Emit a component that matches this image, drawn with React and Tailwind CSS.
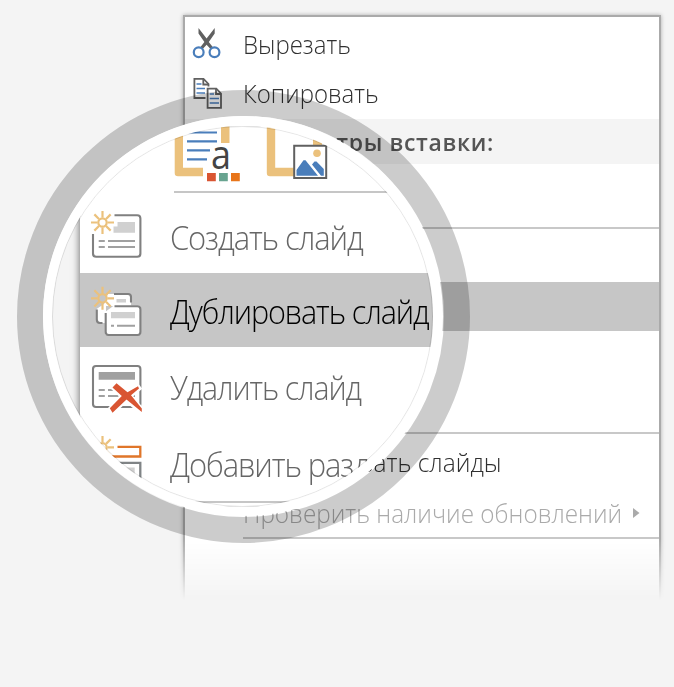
import React from "react";

const Star = ({ cx, cy }) => (
  <g stroke="#ebc17c" strokeWidth="2.2" fill="none">
    <circle cx={cx} cy={cy} r="4.2" />
    {[0, 45, 90, 135, 180, 225, 270, 315].map((a) => (
      <path key={a} d={`M${cx + 5} ${cy}H${cx + 11.5}`} transform={`rotate(${a} ${cx} ${cy})`} />
    ))}
  </g>
);

const CutIcon = () => (
  <svg className="h-[34px] w-8 shrink-0" viewBox="191 26 32 34">
    <path d="M198.5 28 L206.6 38.5 L214.7 28 V33.5 L208.8 42 L213.5 48 L210.5 49 L206.6 44.8 L202.7 49 L199.7 48 L204.4 42 L198.5 33.5Z" fill="#606060" />
    <g fill="#fff" stroke="#4a7ebb" strokeWidth="2.2">
      <circle cx="198.7" cy="52.2" r="4.9" />
      <circle cx="214.5" cy="52.2" r="4.9" />
    </g>
  </svg>
);

const CopyIcon = () => (
  <svg className="h-[34px] w-8 shrink-0" viewBox="191 76 32 34">
    <g fill="none" stroke="#606060" strokeWidth="1.8">
      <path d="M194.4 78.8H203.5L208.5 84V98H194.4Z" fill="#fff" />
      <path d="M203.3 79V84.5H208.5" />
    </g>
    <path d="M196.5 84H201.5M196.5 88.5H205M196.5 93H205" stroke="#4a7ebb" strokeWidth="1.6" />
    <path d="M205.5 86.5H216L222 92V109H205.5Z" fill="#fff" />
    <g fill="none" stroke="#606060" strokeWidth="1.8">
      <path d="M207.6 88.6H216.3L221 93.5V107.8H207.6Z" />
      <path d="M216 89V94H221" />
    </g>
    <path d="M209.7 94H214M209.7 98.5H219M209.7 103H219" stroke="#4a7ebb" strokeWidth="1.6" />
  </svg>
);

const PasteTextIcon = () => (
  <svg className="h-[60px] w-[68px] shrink-0" viewBox="174 124 68 60">
    <path d="M174.7 120H183V167.8H203V176.3H178Q174.7 176.3 174.7 173ZM221 120H229.5V143H221Z" fill="#ebc17c" />
    <path d="M187 132.5H217M187 141.3H217M187 150.3H210M187 159.3H207" stroke="#4a7ebb" strokeWidth="2.2" />
    <text x="211" y="168.7" fontSize="40" fontFamily="'Open Sans'" fill="#444" textLength="20" lengthAdjust="spacingAndGlyphs">a</text>
    <path d="M207 173H215.8V181.2H207Z" fill="#d95532" />
    <path d="M219 173H227.8V181.2H219Z" fill="#68a490" />
    <path d="M231 173H239.8V181.2H231Z" fill="#e8751a" />
  </svg>
);

const PastePictureIcon = () => (
  <svg className="h-[60px] w-[68px] shrink-0" viewBox="266 124 68 60">
    <path d="M266.8 120H275.2V167.8H294V176.3H270Q266.8 176.3 266.8 173ZM313 120H322V146H313Z" fill="#ebc17c" />
    <path d="M294.2 145.8H326.2V178H294.2Z" fill="#fff" stroke="#606060" strokeWidth="2" />
    <circle cx="317" cy="153.3" r="3.8" fill="#ebc17c" />
    <path d="M296.5 175.7V170L303.5 160.3H305.5L318 175.7ZM312 164.5L314.5 161.5H316.5L323.8 169V175.7H321Z" fill="#4a7ebb" />
  </svg>
);

const NewSlideIcon = () => (
  <svg className="-mt-[6px] h-[50px] w-[54px] shrink-0" viewBox="90 210 54 50">
    <path d="M114.5 215.3H137.2Q140.4 215.3 140.4 218.5V253.6Q140.4 256.8 137.2 256.8H96.2Q93 256.8 93 253.6V234" fill="none" stroke="#808080" strokeWidth="2.1" />
    <path d="M117.5 222H135V232.7H113.5V226.5H117.5Z" fill="#d0d0d0" />
    <path d="M98.7 241H104.8M108 241H135M98.7 247H104.8M108 247H135" stroke="#a0a0a0" strokeWidth="2" />
    <Star cx={102.5} cy={222.5} />
  </svg>
);

const DuplicateIcon = () => (
  <svg className="h-[54px] w-[54px] shrink-0" viewBox="90 285 54 54">
    <path d="M108 294H128Q131 294 131 297V306H106V323H100Q96.5 323 96.5 319V309L104 304Z" fill="#fff" />
    <path d="M114 294H128Q131 294 131 297V302.5M96.8 309.5V319.5Q96.8 323 100 323H102.5" fill="none" stroke="#808080" strokeWidth="2.1" />
    <path d="M116.5 299H126V302.5H116.5Z" fill="#d0d0d0" />
    <path d="M105 312L114 305.5H139Q141 305.5 141 308V335H105Z" fill="#fff" />
    <path d="M114.5 306.3H137.5Q140.4 306.3 140.4 309.3V332Q140.4 335 137.5 335H108.7Q105.7 335 105.7 332V313" fill="none" stroke="#808080" strokeWidth="2.1" />
    <path d="M111 312H135V318.3H111Z" fill="#d0d0d0" />
    <path d="M111 325.8H114M117 325.8H135" stroke="#a0a0a0" strokeWidth="2" />
    <Star cx={102.5} cy={298.3} />
  </svg>
);

const DeleteIcon = () => (
  <svg className="h-[50px] w-[54px] shrink-0" viewBox="90 364 54 50">
    <rect x="93" y="366" width="47.4" height="41" rx="3" fill="none" stroke="#808080" strokeWidth="2.1" />
    <path d="M98.7 372H135V379.7H98.7Z" fill="#a0a0a0" />
    <path d="M98.7 390H104.8M108 390H135M98.7 396H104.8M108 396H135" stroke="#a0a0a0" strokeWidth="2" />
    <path
      d="M116.5 383.5L126.5 391.5L138 386.5L139.5 388.5L130.5 396L142 409.5V413L126.3 400L112.5 412.7L110 408.7L121.5 396L113 388Z"
      fill="#fff" stroke="#fff" strokeWidth="4"
    />
    <path d="M116.5 383.3L127.5 392.2L138 386.3L139 388.6L131 395.3L141.8 408.5V412L126.5 399.5L112.5 412.7L109.8 408.3L121.8 396L112.5 387.5Z" fill="#d95532" />
  </svg>
);

const SectionIcon = () => (
  <svg className="-mt-[13px] h-[50px] w-[54px] shrink-0" viewBox="90 435 54 50">
    <path d="M117.5 447.8H140.3V457.5H96" fill="none" stroke="#e0762a" strokeWidth="2.3" />
    <path d="M96 463.8H140.3V484" fill="none" stroke="#808486" strokeWidth="2.3" />
    <path d="M99 468.5H134.7V484H99Z" fill="#d0d0d0" />
    <Star cx={102.5} cy={448.4} />
  </svg>
);

const itemText = "whitespace-nowrap text-[25px] leading-[34px] font-light";
const lensText = "ml-[26px] origin-left whitespace-nowrap text-[33px] leading-[44px] font-light tracking-[-1.2px]";

export default function App() {
  return (
    <div className="relative h-[687px] w-[674px] overflow-hidden bg-[#f4f4f4] pt-[9px] pl-[177px] font-['Open_Sans','Noto_Sans',sans-serif]">
      <div className="h-[600px] w-[490px] overflow-hidden p-[6px] [mask-image:linear-gradient(#000_530px,transparent_591px)]">
        <div className="h-[620px] w-[478px] border-2 border-[#aaa] bg-white shadow-[0_0_4px_rgba(0,0,0,0.3)]">
          <div className="flex h-[51px] items-center gap-[20px] pl-[6px]">
            <CutIcon />
            <span className={`${itemText} origin-left scale-x-[0.96] pt-[2px] text-[#303030]`}>Вырезать</span>
          </div>
          <div className="flex h-[51px] items-start gap-[20px] pt-[8px] pl-[6px]">
            <CopyIcon />
            <span className={`${itemText} origin-left scale-x-[0.96] text-[#303030]`}>Копировать</span>
          </div>
          <div className="flex h-[45px] items-center bg-[#f4f4f4] pt-[2px] pl-[58px]">
            <span className="text-[23px] font-semibold tracking-[0.65px] whitespace-nowrap text-[#555]">Параметры вставки:</span>
          </div>
          <div className="ml-[58px] h-[65px] border-b-2 border-[#c8c8c8]" />
          <div className="h-[53px]" />
          <div className="h-[49px] bg-[#c6c6c6]" />
          <div className="ml-[58px] h-[103px] border-b-2 border-[#c8c8c8]" />
          <div className="flex h-[56px] items-center justify-end pr-[158px]">
            <span className={`${itemText} origin-right scale-x-[0.98] pb-px text-[#303030]`}>Опубликовать слайды</span>
          </div>
          <div className="ml-[58px] flex h-[49px] items-center border-b-2 border-[#c8c8c8] pb-[2px]">
            <span className={`${itemText} w-[378px] origin-left scale-x-[0.973] text-[#aaa]`}>Проверить наличие обновлений</span>
            <svg className="ml-[12px] h-3 w-[7px] shrink-0" viewBox="0 0 7 12"><path d="M0 1L6.5 6L0 11Z" fill="#aaa" /></svg>
          </div>
        </div>
      </div>

      <div className="absolute top-[90px] left-[16.5px] size-[453px] rounded-full border-[26.5px] border-black/20">
        <div className="size-[400px] rounded-full bg-white p-[9.5px]">
          <div className="relative size-[381px] overflow-hidden rounded-full bg-[#f4f4f4] pl-[28px]">
            <div className="h-[381px] w-[400px] bg-white pl-px shadow-[0_0_7px_1px_rgba(0,0,0,0.5)]">
              <div className="ml-[93px] flex h-[67px] items-start gap-[24px] border-b-2 border-[#c6c6c6]">
                <div className="-mt-[2px] flex gap-[24px]"><PasteTextIcon /><PastePictureIcon /></div>
              </div>
              <div className="flex h-[80px] items-center pt-[10px] pl-[9px]">
                <NewSlideIcon />
                <span className={`${lensText} scale-x-[0.937] text-[#666]`}>Создать слайд</span>
              </div>
              <div className="-ml-px flex h-[74px] items-center bg-[#c6c6c6] pt-[4px] pl-[10px]">
                <DuplicateIcon />
                <span className={`${lensText} scale-x-[0.926] text-black`}>Дублировать слайд</span>
              </div>
              <div className="flex h-[81px] items-center pt-[3px] pl-[9px]">
                <DeleteIcon />
                <span className={`${lensText} -mt-[2px] scale-x-[0.917] text-[#666]`}>Удалить слайд</span>
              </div>
              <div className="ml-[9px] flex h-[75px] items-center border-b-2 border-[#c6c6c6] pt-[2px]">
                <SectionIcon />
                <span className={`${lensText} scale-x-[0.937] text-[#666]`}>Добавить раздел</span>
              </div>
            </div>
            <div className="absolute inset-0 rounded-full border border-black/10" />
          </div>
        </div>
      </div>
    </div>
  );
}
